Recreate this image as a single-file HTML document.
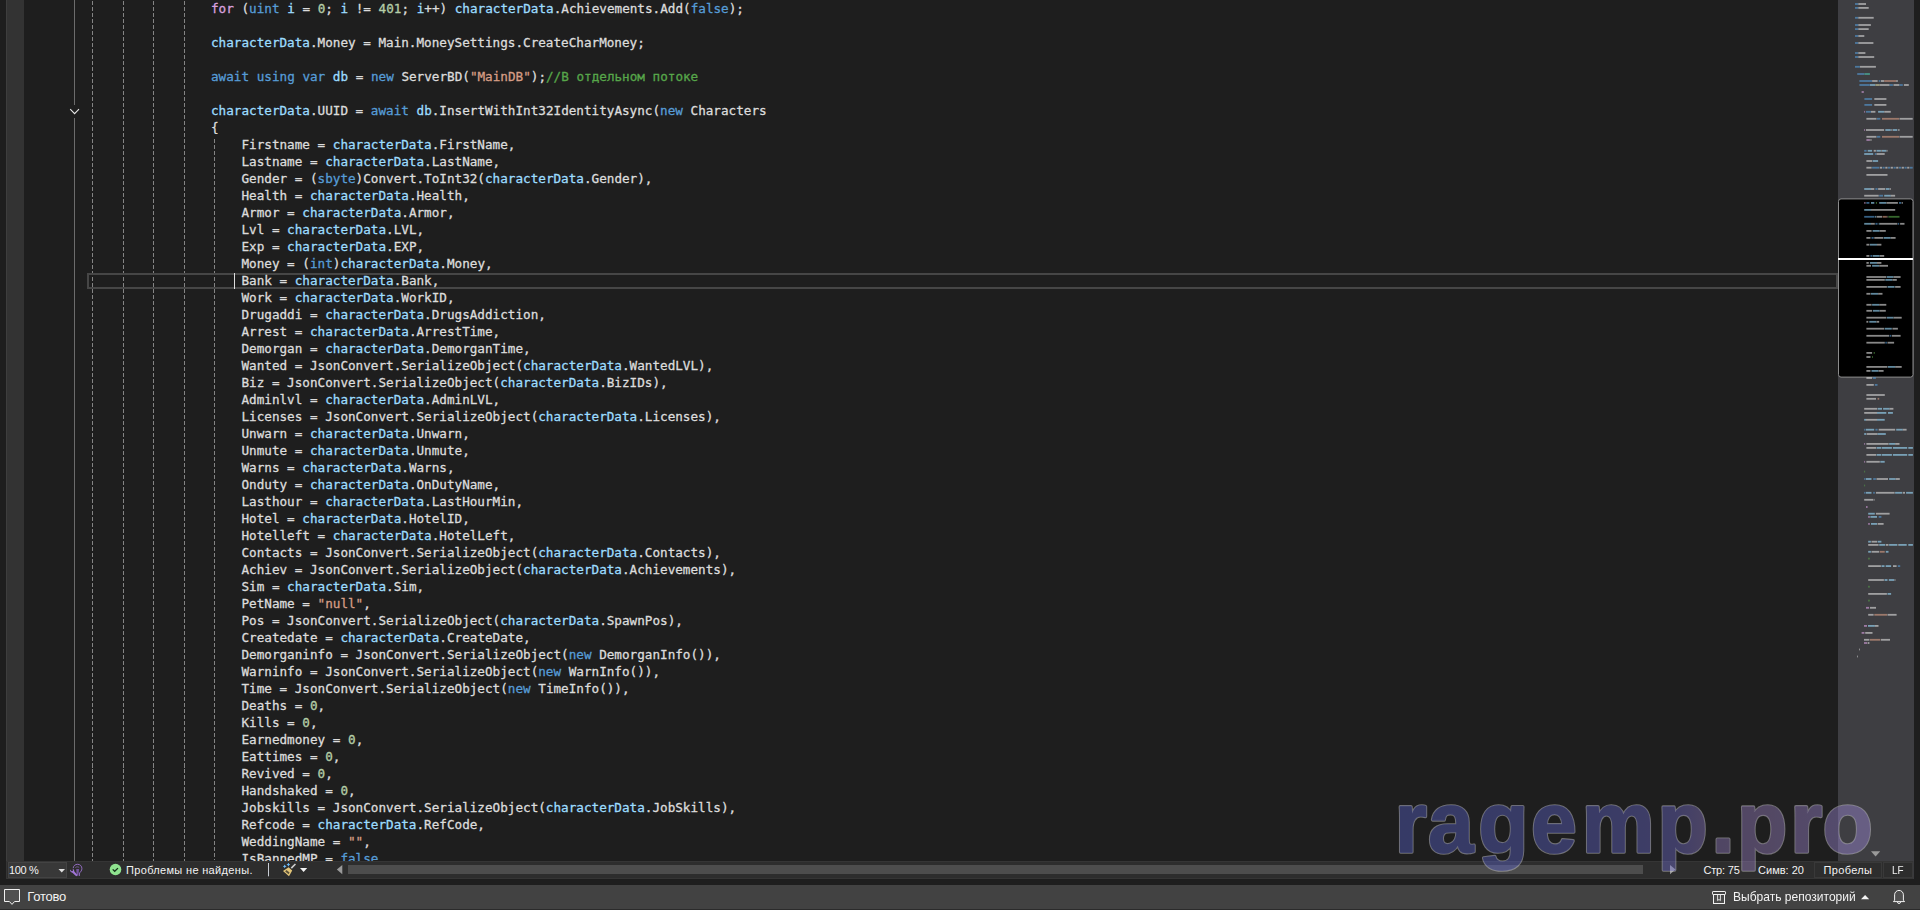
<!DOCTYPE html>
<html lang="ru">
<head>
<meta charset="utf-8">
<title>Visual Studio</title>
<style>
*{box-sizing:border-box;margin:0;padding:0}
html,body{width:1920px;height:910px;overflow:hidden;background:#1e1e1e}
body{position:relative;font-family:"Liberation Sans","DejaVu Sans",sans-serif;color:#dcdcdc}
.abs{position:absolute}
#gutter{left:6px;top:0;width:18px;height:861px;background:#333333;border-left:1px solid #3e3e3e}
#editor{left:0;top:0;width:1838px;height:861px;overflow:hidden}
#code{left:211px;top:0px;-webkit-text-stroke:0.3px;font-family:"DejaVu Sans Mono","Liberation Mono",monospace;font-size:12.65px;line-height:17px;color:#dcdcdc}
#code .l{height:17px;white-space:pre}
.k{color:#569cd6}.f{color:#d8a0df}.v{color:#9cdcfe}.n{color:#b5cea8}.s{color:#d69d85}.c{color:#57a64a}
.guide{width:1px;top:0;height:861px;background:repeating-linear-gradient(to bottom,transparent 0,transparent 1.3px,#848484 1.3px,#848484 5.5px,transparent 5.5px,transparent 6px)}
#curline{left:87px;top:273px;width:1751px;height:16px;border:2px solid #464646}
#caret{left:234px;top:273px;width:1px;height:16px;background:#dcdcdc}
#minimap{left:1838px;top:0;width:76px;height:861px;background:#3e3e42;overflow:hidden}
#bbar{left:6px;top:861px;width:1908px;height:18px;background:#2d2d2d;border:1px solid #353535;font-size:12px}
#status{left:0;top:885px;width:1920px;height:25px;background:#424242;font-size:12px;border-bottom:1px solid #2b2b2b}
.t{position:absolute;white-space:nowrap;line-height:16px;color:#f3f3f3}
.t.m{font-size:11px;top:0px}
.t.s{font-size:13px;top:4px}
</style>
</head>
<body>
<div id="editor" class="abs">
  <div id="gutter" class="abs"></div>
  <div class="abs" style="left:74px;top:0;width:1px;height:105px;background:#6c6c6c"></div>
  <div class="abs" style="left:74px;top:118px;width:1px;height:743px;background:#6c6c6c"></div>
  <svg class="abs" style="left:68px;top:106px" width="14" height="12" viewBox="0 0 14 12"><path d="M2.2 3.2 L6.6 7.6 L11 3.2" fill="none" stroke="#e8e8e8" stroke-width="1.1"/></svg>
  <div class="abs guide" style="left:92px"></div>
  <div class="abs guide" style="left:123px"></div>
  <div class="abs guide" style="left:153px"></div>
  <div class="abs guide" style="left:184px"></div>
  <div class="abs guide" style="left:214px;top:139px;height:722px;background-position:0 -1px"></div>
  <div id="curline" class="abs"></div>
  <div id="caret" class="abs"></div>
  <div id="code" class="abs">
<div class="l"><span class="f">for</span> (<span class="k">uint</span> <span class="v">i</span> = <span class="n">0</span>; <span class="v">i</span> != <span class="n">401</span>; <span class="v">i</span>++) <span class="v">characterData</span>.Achievements.Add(<span class="k">false</span>);</div>
<div class="l"></div>
<div class="l"><span class="v">characterData</span>.Money = Main.MoneySettings.CreateCharMoney;</div>
<div class="l"></div>
<div class="l"><span class="k">await</span> <span class="k">using</span> <span class="k">var</span> <span class="v">db</span> = <span class="k">new</span> ServerBD(<span class="s">&quot;MainDB&quot;</span>);<span class="c">//В отдельном потоке</span></div>
<div class="l"></div>
<div class="l"><span class="v">characterData</span>.UUID = <span class="k">await</span> <span class="v">db</span>.InsertWithInt32IdentityAsync(<span class="k">new</span> Characters</div>
<div class="l">{</div>
<div class="l">    Firstname = <span class="v">characterData</span>.FirstName,</div>
<div class="l">    Lastname = <span class="v">characterData</span>.LastName,</div>
<div class="l">    Gender = (<span class="k">sbyte</span>)Convert.ToInt32(<span class="v">characterData</span>.Gender),</div>
<div class="l">    Health = <span class="v">characterData</span>.Health,</div>
<div class="l">    Armor = <span class="v">characterData</span>.Armor,</div>
<div class="l">    Lvl = <span class="v">characterData</span>.LVL,</div>
<div class="l">    Exp = <span class="v">characterData</span>.EXP,</div>
<div class="l">    Money = (<span class="k">int</span>)<span class="v">characterData</span>.Money,</div>
<div class="l">    Bank = <span class="v">characterData</span>.Bank,</div>
<div class="l">    Work = <span class="v">characterData</span>.WorkID,</div>
<div class="l">    Drugaddi = <span class="v">characterData</span>.DrugsAddiction,</div>
<div class="l">    Arrest = <span class="v">characterData</span>.ArrestTime,</div>
<div class="l">    Demorgan = <span class="v">characterData</span>.DemorganTime,</div>
<div class="l">    Wanted = JsonConvert.SerializeObject(<span class="v">characterData</span>.WantedLVL),</div>
<div class="l">    Biz = JsonConvert.SerializeObject(<span class="v">characterData</span>.BizIDs),</div>
<div class="l">    Adminlvl = <span class="v">characterData</span>.AdminLVL,</div>
<div class="l">    Licenses = JsonConvert.SerializeObject(<span class="v">characterData</span>.Licenses),</div>
<div class="l">    Unwarn = <span class="v">characterData</span>.Unwarn,</div>
<div class="l">    Unmute = <span class="v">characterData</span>.Unmute,</div>
<div class="l">    Warns = <span class="v">characterData</span>.Warns,</div>
<div class="l">    Onduty = <span class="v">characterData</span>.OnDutyName,</div>
<div class="l">    Lasthour = <span class="v">characterData</span>.LastHourMin,</div>
<div class="l">    Hotel = <span class="v">characterData</span>.HotelID,</div>
<div class="l">    Hotelleft = <span class="v">characterData</span>.HotelLeft,</div>
<div class="l">    Contacts = JsonConvert.SerializeObject(<span class="v">characterData</span>.Contacts),</div>
<div class="l">    Achiev = JsonConvert.SerializeObject(<span class="v">characterData</span>.Achievements),</div>
<div class="l">    Sim = <span class="v">characterData</span>.Sim,</div>
<div class="l">    PetName = <span class="s">&quot;null&quot;</span>,</div>
<div class="l">    Pos = JsonConvert.SerializeObject(<span class="v">characterData</span>.SpawnPos),</div>
<div class="l">    Createdate = <span class="v">characterData</span>.CreateDate,</div>
<div class="l">    Demorganinfo = JsonConvert.SerializeObject(<span class="k">new</span> DemorganInfo()),</div>
<div class="l">    Warninfo = JsonConvert.SerializeObject(<span class="k">new</span> WarnInfo()),</div>
<div class="l">    Time = JsonConvert.SerializeObject(<span class="k">new</span> TimeInfo()),</div>
<div class="l">    Deaths = <span class="n">0</span>,</div>
<div class="l">    Kills = <span class="n">0</span>,</div>
<div class="l">    Earnedmoney = <span class="n">0</span>,</div>
<div class="l">    Eattimes = <span class="n">0</span>,</div>
<div class="l">    Revived = <span class="n">0</span>,</div>
<div class="l">    Handshaked = <span class="n">0</span>,</div>
<div class="l">    Jobskills = JsonConvert.SerializeObject(<span class="v">characterData</span>.JobSkills),</div>
<div class="l">    Refcode = <span class="v">characterData</span>.RefCode,</div>
<div class="l">    WeddingName = <span class="s">&quot;&quot;</span>,</div>
<div class="l">    IsBannedMP = <span class="k">false</span>,</div>
  </div>
</div>
<div id="minimap" class="abs">
<svg class="abs" style="left:0;top:0" width="76" height="861" viewBox="0 0 76 861">
<rect x="0.5" y="198.9" width="74.5" height="178.2" rx="2.5" fill="#000" stroke="#8c8c8c" stroke-width="1"/>
<g opacity="0.62">
<rect x="17.0" y="3.1" width="3.3" height="1.8" fill="#569cd6"/>
<rect x="20.3" y="3.1" width="7.7" height="1.8" fill="#dcdcdc"/>
<rect x="17.0" y="7.0" width="3.3" height="1.8" fill="#569cd6"/>
<rect x="20.3" y="7.0" width="10.4" height="1.8" fill="#dcdcdc"/>
<rect x="17.0" y="16.9" width="3.3" height="1.8" fill="#569cd6"/>
<rect x="20.3" y="16.9" width="15.4" height="1.8" fill="#dcdcdc"/>
<rect x="17.0" y="24.1" width="3.3" height="1.8" fill="#569cd6"/>
<rect x="20.3" y="24.1" width="12.6" height="1.8" fill="#dcdcdc"/>
<rect x="17.0" y="28.2" width="3.3" height="1.8" fill="#569cd6"/>
<rect x="20.3" y="28.2" width="10.4" height="1.8" fill="#dcdcdc"/>
<rect x="17.0" y="35.1" width="3.3" height="1.8" fill="#569cd6"/>
<rect x="20.3" y="35.1" width="6.0" height="1.8" fill="#dcdcdc"/>
<rect x="17.0" y="42.1" width="3.3" height="1.8" fill="#569cd6"/>
<rect x="20.3" y="42.1" width="15.1" height="1.8" fill="#dcdcdc"/>
<rect x="17.0" y="52.1" width="3.3" height="1.8" fill="#569cd6"/>
<rect x="20.3" y="52.1" width="7.1" height="1.8" fill="#dcdcdc"/>
<rect x="17.0" y="56.1" width="3.3" height="1.8" fill="#569cd6"/>
<rect x="20.3" y="56.1" width="15.9" height="1.8" fill="#dcdcdc"/>
<rect x="17.0" y="65.9" width="4.9" height="1.8" fill="#569cd6"/>
<rect x="22.0" y="65.9" width="15.9" height="1.8" fill="#dcdcdc"/>
<rect x="19.2" y="73.1" width="7.1" height="1.8" fill="#569cd6"/>
<rect x="26.4" y="73.1" width="5.5" height="1.8" fill="#4ec9b0"/>
<rect x="21.4" y="80.1" width="12.6" height="1.8" fill="#569cd6"/>
<rect x="34.1" y="80.1" width="5.5" height="1.8" fill="#dcdcdc"/>
<rect x="40.7" y="80.1" width="1.6" height="1.8" fill="#569cd6"/>
<rect x="42.9" y="80.1" width="3.3" height="1.8" fill="#dcdcdc"/>
<rect x="46.2" y="80.1" width="12.1" height="1.8" fill="#d69d85"/>
<rect x="58.2" y="80.1" width="1.6" height="1.8" fill="#dcdcdc"/>
<rect x="21.4" y="84.1" width="10.4" height="1.8" fill="#569cd6"/>
<rect x="31.9" y="84.1" width="5.5" height="1.8" fill="#9cdcfe"/>
<rect x="37.4" y="84.1" width="4.4" height="1.8" fill="#dcdcaa"/>
<rect x="41.8" y="84.1" width="9.9" height="1.8" fill="#dcdcdc"/>
<rect x="51.6" y="84.1" width="3.3" height="1.8" fill="#569cd6"/>
<rect x="55.5" y="84.1" width="6.0" height="1.8" fill="#dcdcdc"/>
<rect x="61.5" y="84.1" width="3.3" height="1.8" fill="#569cd6"/>
<rect x="65.9" y="84.1" width="4.9" height="1.8" fill="#dcdcdc"/>
<rect x="23.6" y="91.1" width="2.2" height="1.8" fill="#d8a0df"/>
<rect x="26.4" y="98.1" width="7.7" height="1.8" fill="#569cd6"/>
<rect x="36.3" y="98.1" width="12.1" height="1.8" fill="#dcdcdc"/>
<rect x="26.4" y="104.0" width="7.7" height="1.8" fill="#569cd6"/>
<rect x="36.3" y="104.0" width="12.1" height="1.8" fill="#dcdcdc"/>
<rect x="26.2" y="110.9" width="0.9" height="1.8" fill="#d8a0df"/>
<rect x="28.0" y="110.9" width="4.9" height="1.8" fill="#569cd6"/>
<rect x="33.0" y="110.9" width="4.4" height="1.8" fill="#dcdcdc"/>
<rect x="40.1" y="110.9" width="6.0" height="1.8" fill="#9cdcfe"/>
<rect x="46.2" y="110.9" width="6.6" height="1.8" fill="#dcdcdc"/>
<rect x="28.4" y="117.9" width="10.1" height="1.8" fill="#dcdcdc"/>
<rect x="39.0" y="117.9" width="3.3" height="1.8" fill="#569cd6"/>
<rect x="44.0" y="117.9" width="17.0" height="1.8" fill="#d69d85"/>
<rect x="61.5" y="117.9" width="13.2" height="1.8" fill="#dcdcdc"/>
<rect x="26.2" y="129.1" width="0.9" height="1.8" fill="#d8a0df"/>
<rect x="28.0" y="129.1" width="18.1" height="1.8" fill="#dcdcdc"/>
<rect x="47.3" y="129.1" width="5.5" height="1.8" fill="#9cdcfe"/>
<rect x="53.3" y="129.1" width="1.1" height="1.8" fill="#dcdcdc"/>
<rect x="54.9" y="129.1" width="4.4" height="1.8" fill="#9cdcfe"/>
<rect x="60.2" y="129.1" width="1.3" height="1.8" fill="#dcdcdc"/>
<rect x="28.4" y="135.9" width="10.1" height="1.8" fill="#dcdcdc"/>
<rect x="39.0" y="135.9" width="3.3" height="1.8" fill="#569cd6"/>
<rect x="44.0" y="135.9" width="17.0" height="1.8" fill="#d69d85"/>
<rect x="61.5" y="135.9" width="13.2" height="1.8" fill="#dcdcdc"/>
<rect x="28.4" y="139.1" width="3.5" height="1.8" fill="#d8a0df"/>
<rect x="32.4" y="139.1" width="1.1" height="1.8" fill="#dcdcdc"/>
<rect x="26.2" y="149.9" width="2.4" height="1.8" fill="#569cd6"/>
<rect x="29.7" y="149.9" width="4.4" height="1.8" fill="#9cdcfe"/>
<rect x="35.7" y="149.9" width="2.2" height="1.8" fill="#dcdcdc"/>
<rect x="38.5" y="149.9" width="4.4" height="1.8" fill="#9cdcfe"/>
<rect x="43.1" y="149.9" width="0.7" height="1.8" fill="#dcdcdc"/>
<rect x="44.0" y="149.9" width="4.4" height="1.8" fill="#9cdcfe"/>
<rect x="48.6" y="149.9" width="0.9" height="1.8" fill="#dcdcdc"/>
<rect x="26.2" y="153.1" width="9.0" height="1.8" fill="#9cdcfe"/>
<rect x="36.8" y="153.1" width="1.6" height="1.8" fill="#569cd6"/>
<rect x="38.5" y="153.1" width="8.2" height="1.8" fill="#dcdcdc"/>
<rect x="28.4" y="160.1" width="5.7" height="1.8" fill="#dcdcdc"/>
<rect x="34.6" y="160.1" width="5.5" height="1.8" fill="#9cdcfe"/>
<rect x="28.4" y="166.8" width="5.2" height="1.8" fill="#dcdcdc"/>
<rect x="34.1" y="166.8" width="7.1" height="1.8" fill="#569cd6"/>
<rect x="41.8" y="166.8" width="2.2" height="1.8" fill="#dcdcdc"/>
<rect x="44.5" y="166.8" width="2.2" height="1.8" fill="#569cd6"/>
<rect x="47.3" y="166.8" width="2.2" height="1.8" fill="#dcdcdc"/>
<rect x="50.0" y="166.8" width="2.2" height="1.8" fill="#569cd6"/>
<rect x="52.7" y="166.8" width="2.2" height="1.8" fill="#dcdcdc"/>
<rect x="55.5" y="166.8" width="2.2" height="1.8" fill="#569cd6"/>
<rect x="58.2" y="166.8" width="2.2" height="1.8" fill="#dcdcdc"/>
<rect x="61.0" y="166.8" width="2.2" height="1.8" fill="#569cd6"/>
<rect x="63.7" y="166.8" width="2.2" height="1.8" fill="#dcdcdc"/>
<rect x="66.5" y="166.8" width="2.2" height="1.8" fill="#569cd6"/>
<rect x="69.2" y="166.8" width="2.2" height="1.8" fill="#dcdcdc"/>
<rect x="72.0" y="166.8" width="2.7" height="1.8" fill="#569cd6"/>
<rect x="28.4" y="174.0" width="21.1" height="1.8" fill="#dcdcdc"/>
<rect x="26.2" y="188.1" width="6.8" height="1.8" fill="#9cdcfe"/>
<rect x="33.0" y="188.1" width="3.3" height="1.8" fill="#dcdcdc"/>
<rect x="37.4" y="188.1" width="2.2" height="1.8" fill="#569cd6"/>
<rect x="40.1" y="188.1" width="7.1" height="1.8" fill="#dcdcdc"/>
<rect x="47.8" y="188.1" width="3.8" height="1.8" fill="#9cdcfe"/>
<rect x="51.9" y="188.1" width="0.9" height="1.8" fill="#dcdcdc"/>
<rect x="26.2" y="194.8" width="14.5" height="1.8" fill="#dcdcdc"/>
<rect x="41.2" y="194.8" width="3.8" height="1.8" fill="#569cd6"/>
<rect x="46.2" y="194.8" width="6.6" height="1.8" fill="#9cdcfe"/>
<rect x="52.7" y="194.8" width="4.4" height="1.8" fill="#dcdcdc"/>
<rect x="26.2" y="202.0" width="1.1" height="1.8" fill="#d8a0df"/>
<rect x="27.7" y="202.0" width="0.4" height="1.8" fill="#dcdcdc"/>
<rect x="28.4" y="202.0" width="3.0" height="1.8" fill="#569cd6"/>
<rect x="33.0" y="202.0" width="3.3" height="1.8" fill="#9cdcfe"/>
<rect x="37.9" y="202.0" width="1.1" height="1.8" fill="#57a64a"/>
<rect x="41.2" y="202.0" width="7.1" height="1.8" fill="#9cdcfe"/>
<rect x="48.4" y="202.0" width="11.5" height="1.8" fill="#dcdcdc"/>
<rect x="61.0" y="202.0" width="2.2" height="1.8" fill="#569cd6"/>
<rect x="63.7" y="202.0" width="1.1" height="1.8" fill="#dcdcdc"/>
<rect x="26.2" y="209.0" width="6.8" height="1.8" fill="#9cdcfe"/>
<rect x="33.0" y="209.0" width="24.2" height="1.8" fill="#dcdcdc"/>
<rect x="26.2" y="215.9" width="10.1" height="1.8" fill="#569cd6"/>
<rect x="36.8" y="215.9" width="1.1" height="1.8" fill="#9cdcfe"/>
<rect x="38.5" y="215.9" width="5.5" height="1.8" fill="#dcdcdc"/>
<rect x="44.5" y="215.9" width="4.4" height="1.8" fill="#d69d85"/>
<rect x="49.5" y="215.9" width="0.7" height="1.8" fill="#dcdcdc"/>
<rect x="50.5" y="215.9" width="11.0" height="1.8" fill="#57a64a"/>
<rect x="26.2" y="222.9" width="6.8" height="1.8" fill="#9cdcfe"/>
<rect x="33.0" y="222.9" width="3.8" height="1.8" fill="#dcdcdc"/>
<rect x="37.4" y="222.9" width="2.2" height="1.8" fill="#569cd6"/>
<rect x="40.7" y="222.9" width="1.1" height="1.8" fill="#9cdcfe"/>
<rect x="41.8" y="222.9" width="17.6" height="1.8" fill="#dcdcdc"/>
<rect x="59.9" y="222.9" width="1.3" height="1.8" fill="#569cd6"/>
<rect x="62.1" y="222.9" width="4.4" height="1.8" fill="#dcdcdc"/>
<rect x="28.4" y="230.0" width="5.2" height="1.8" fill="#dcdcdc"/>
<rect x="34.6" y="230.0" width="7.1" height="1.8" fill="#9cdcfe"/>
<rect x="41.8" y="230.0" width="6.0" height="1.8" fill="#dcdcdc"/>
<rect x="28.4" y="237.0" width="4.1" height="1.8" fill="#dcdcdc"/>
<rect x="33.5" y="237.0" width="2.2" height="1.8" fill="#569cd6"/>
<rect x="36.3" y="237.0" width="8.8" height="1.8" fill="#dcdcdc"/>
<rect x="45.6" y="237.0" width="7.1" height="1.8" fill="#9cdcfe"/>
<rect x="52.7" y="237.0" width="4.9" height="1.8" fill="#dcdcdc"/>
<rect x="28.4" y="243.8" width="3.0" height="1.8" fill="#dcdcdc"/>
<rect x="31.9" y="243.8" width="7.1" height="1.8" fill="#9cdcfe"/>
<rect x="39.0" y="243.8" width="4.4" height="1.8" fill="#dcdcdc"/>
<rect x="28.4" y="255.0" width="3.0" height="1.8" fill="#dcdcdc"/>
<rect x="32.4" y="255.0" width="1.6" height="1.8" fill="#569cd6"/>
<rect x="34.6" y="255.0" width="7.1" height="1.8" fill="#9cdcfe"/>
<rect x="41.8" y="255.0" width="4.4" height="1.8" fill="#dcdcdc"/>
<rect x="28.4" y="262.0" width="2.4" height="1.8" fill="#dcdcdc"/>
<rect x="31.9" y="262.0" width="7.1" height="1.8" fill="#9cdcfe"/>
<rect x="39.0" y="262.0" width="4.4" height="1.8" fill="#dcdcdc"/>
<rect x="28.4" y="264.9" width="4.6" height="1.8" fill="#dcdcdc"/>
<rect x="34.1" y="264.9" width="7.1" height="1.8" fill="#9cdcfe"/>
<rect x="41.2" y="264.9" width="8.8" height="1.8" fill="#dcdcdc"/>
<rect x="28.4" y="276.1" width="20.0" height="1.8" fill="#dcdcdc"/>
<rect x="48.9" y="276.1" width="6.6" height="1.8" fill="#9cdcfe"/>
<rect x="55.5" y="276.1" width="7.1" height="1.8" fill="#dcdcdc"/>
<rect x="28.4" y="279.0" width="18.4" height="1.8" fill="#dcdcdc"/>
<rect x="47.3" y="279.0" width="7.1" height="1.8" fill="#9cdcfe"/>
<rect x="54.4" y="279.0" width="4.4" height="1.8" fill="#dcdcdc"/>
<rect x="28.4" y="286.0" width="20.5" height="1.8" fill="#dcdcdc"/>
<rect x="49.5" y="286.0" width="7.1" height="1.8" fill="#9cdcfe"/>
<rect x="57.1" y="286.0" width="5.5" height="1.8" fill="#dcdcdc"/>
<rect x="28.4" y="292.9" width="4.1" height="1.8" fill="#dcdcdc"/>
<rect x="33.0" y="292.9" width="7.1" height="1.8" fill="#9cdcfe"/>
<rect x="40.1" y="292.9" width="4.4" height="1.8" fill="#dcdcdc"/>
<rect x="28.4" y="303.9" width="5.2" height="1.8" fill="#dcdcdc"/>
<rect x="34.1" y="303.9" width="7.1" height="1.8" fill="#9cdcfe"/>
<rect x="41.2" y="303.9" width="7.1" height="1.8" fill="#dcdcdc"/>
<rect x="28.4" y="309.9" width="5.7" height="1.8" fill="#dcdcdc"/>
<rect x="34.9" y="309.9" width="6.8" height="1.8" fill="#9cdcfe"/>
<rect x="41.8" y="309.9" width="6.0" height="1.8" fill="#dcdcdc"/>
<rect x="28.4" y="316.8" width="20.0" height="1.8" fill="#dcdcdc"/>
<rect x="48.9" y="316.8" width="6.6" height="1.8" fill="#9cdcfe"/>
<rect x="55.5" y="316.8" width="8.2" height="1.8" fill="#dcdcdc"/>
<rect x="28.4" y="320.9" width="1.9" height="1.8" fill="#dcdcdc"/>
<rect x="31.3" y="320.9" width="7.1" height="1.8" fill="#9cdcfe"/>
<rect x="38.5" y="320.9" width="2.7" height="1.8" fill="#dcdcdc"/>
<rect x="28.4" y="327.8" width="17.8" height="1.8" fill="#dcdcdc"/>
<rect x="46.7" y="327.8" width="7.1" height="1.8" fill="#9cdcfe"/>
<rect x="54.4" y="327.8" width="5.5" height="1.8" fill="#dcdcdc"/>
<rect x="28.4" y="334.9" width="22.7" height="1.8" fill="#dcdcdc"/>
<rect x="51.6" y="334.9" width="1.6" height="1.8" fill="#569cd6"/>
<rect x="53.8" y="334.9" width="8.8" height="1.8" fill="#dcdcdc"/>
<rect x="28.4" y="341.8" width="18.4" height="1.8" fill="#dcdcdc"/>
<rect x="47.3" y="341.8" width="1.6" height="1.8" fill="#569cd6"/>
<rect x="49.5" y="341.8" width="6.6" height="1.8" fill="#dcdcdc"/>
<rect x="28.4" y="352.0" width="5.7" height="1.8" fill="#dcdcdc"/>
<rect x="35.7" y="352.0" width="1.1" height="1.8" fill="#57a64a"/>
<rect x="28.4" y="356.1" width="4.1" height="1.8" fill="#dcdcdc"/>
<rect x="34.1" y="356.1" width="0.9" height="1.8" fill="#57a64a"/>
<rect x="28.4" y="366.0" width="21.1" height="1.8" fill="#dcdcdc"/>
<rect x="50.0" y="366.0" width="7.1" height="1.8" fill="#9cdcfe"/>
<rect x="57.1" y="366.0" width="6.6" height="1.8" fill="#dcdcdc"/>
<rect x="28.4" y="370.0" width="4.1" height="1.8" fill="#dcdcdc"/>
<rect x="33.5" y="370.0" width="7.1" height="1.8" fill="#9cdcfe"/>
<rect x="40.7" y="370.0" width="4.9" height="1.8" fill="#dcdcdc"/>
<rect x="28.4" y="377.1" width="5.7" height="1.8" fill="#dcdcdc"/>
<rect x="34.9" y="377.1" width="3.0" height="1.8" fill="#569cd6"/>
<rect x="28.4" y="384.0" width="7.4" height="1.8" fill="#dcdcdc"/>
<rect x="36.8" y="384.0" width="2.7" height="1.8" fill="#569cd6"/>
<rect x="28.4" y="394.1" width="18.4" height="1.8" fill="#dcdcdc"/>
<rect x="28.4" y="397.9" width="9.6" height="1.8" fill="#dcdcdc"/>
<rect x="39.6" y="397.9" width="1.6" height="1.8" fill="#d69d85"/>
<rect x="26.2" y="407.9" width="12.9" height="1.8" fill="#dcdcdc"/>
<rect x="39.6" y="407.9" width="4.4" height="1.8" fill="#9cdcfe"/>
<rect x="45.1" y="407.9" width="6.6" height="1.8" fill="#9cdcfe"/>
<rect x="51.6" y="407.9" width="3.8" height="1.8" fill="#dcdcdc"/>
<rect x="26.2" y="412.0" width="12.9" height="1.8" fill="#dcdcdc"/>
<rect x="39.0" y="412.0" width="9.3" height="1.8" fill="#9cdcfe"/>
<rect x="50.0" y="412.0" width="4.9" height="1.8" fill="#9cdcfe"/>
<rect x="26.2" y="418.9" width="1.9" height="1.8" fill="#9cdcfe"/>
<rect x="28.0" y="418.9" width="11.0" height="1.8" fill="#dcdcdc"/>
<rect x="39.0" y="418.9" width="7.7" height="1.8" fill="#9cdcfe"/>
<rect x="26.2" y="428.8" width="1.3" height="1.8" fill="#569cd6"/>
<rect x="28.0" y="428.8" width="8.2" height="1.8" fill="#9cdcfe"/>
<rect x="37.4" y="428.8" width="2.2" height="1.8" fill="#569cd6"/>
<rect x="40.7" y="428.8" width="16.5" height="1.8" fill="#dcdcdc"/>
<rect x="58.2" y="428.8" width="6.6" height="1.8" fill="#9cdcfe"/>
<rect x="64.8" y="428.8" width="3.8" height="1.8" fill="#dcdcdc"/>
<rect x="26.2" y="433.1" width="1.9" height="1.8" fill="#9cdcfe"/>
<rect x="28.6" y="433.1" width="11.0" height="1.8" fill="#dcdcdc"/>
<rect x="39.6" y="433.1" width="8.2" height="1.8" fill="#9cdcfe"/>
<rect x="26.2" y="443.0" width="0.9" height="1.8" fill="#d8a0df"/>
<rect x="28.4" y="443.0" width="22.2" height="1.8" fill="#dcdcdc"/>
<rect x="51.1" y="443.0" width="6.0" height="1.8" fill="#9cdcfe"/>
<rect x="57.1" y="443.0" width="4.4" height="1.8" fill="#dcdcdc"/>
<rect x="28.4" y="447.0" width="9.6" height="1.8" fill="#dcdcdc"/>
<rect x="38.5" y="447.0" width="4.9" height="1.8" fill="#9cdcfe"/>
<rect x="44.0" y="447.0" width="9.9" height="1.8" fill="#9cdcfe"/>
<rect x="54.9" y="447.0" width="14.3" height="1.8" fill="#9cdcfe"/>
<rect x="70.3" y="447.0" width="4.6" height="1.8" fill="#9cdcfe"/>
<rect x="28.4" y="454.0" width="9.6" height="1.8" fill="#dcdcdc"/>
<rect x="38.5" y="454.0" width="4.9" height="1.8" fill="#9cdcfe"/>
<rect x="44.0" y="454.0" width="9.9" height="1.8" fill="#9cdcfe"/>
<rect x="54.9" y="454.0" width="14.3" height="1.8" fill="#9cdcfe"/>
<rect x="70.3" y="454.0" width="4.6" height="1.8" fill="#9cdcfe"/>
<rect x="26.2" y="460.9" width="0.9" height="1.8" fill="#d8a0df"/>
<rect x="28.4" y="460.9" width="13.4" height="1.8" fill="#dcdcdc"/>
<rect x="42.3" y="460.9" width="4.4" height="1.8" fill="#9cdcfe"/>
<rect x="26.2" y="470.7" width="0.9" height="1.8" fill="#57a64a"/>
<rect x="26.2" y="478.1" width="1.3" height="1.8" fill="#569cd6"/>
<rect x="28.0" y="478.1" width="5.5" height="1.8" fill="#9cdcfe"/>
<rect x="35.2" y="478.1" width="2.7" height="1.8" fill="#569cd6"/>
<rect x="38.5" y="478.1" width="11.5" height="1.8" fill="#dcdcdc"/>
<rect x="51.1" y="478.1" width="6.6" height="1.8" fill="#9cdcfe"/>
<rect x="57.7" y="478.1" width="4.1" height="1.8" fill="#dcdcdc"/>
<rect x="26.2" y="484.6" width="0.9" height="1.8" fill="#57a64a"/>
<rect x="26.2" y="491.9" width="1.3" height="1.8" fill="#569cd6"/>
<rect x="28.0" y="491.9" width="5.5" height="1.8" fill="#9cdcfe"/>
<rect x="35.2" y="491.9" width="1.6" height="1.8" fill="#569cd6"/>
<rect x="37.9" y="491.9" width="18.7" height="1.8" fill="#dcdcdc"/>
<rect x="57.1" y="491.9" width="7.1" height="1.8" fill="#9cdcfe"/>
<rect x="64.8" y="491.9" width="2.2" height="1.8" fill="#dcdcdc"/>
<rect x="68.1" y="491.9" width="6.8" height="1.8" fill="#9cdcfe"/>
<rect x="26.2" y="498.9" width="9.0" height="1.8" fill="#dcdcdc"/>
<rect x="35.7" y="498.9" width="0.8" height="1.8" fill="#dcdcdc"/>
<rect x="28.0" y="506.1" width="1.6" height="1.8" fill="#d8a0df"/>
<rect x="30.2" y="512.8" width="6.6" height="1.8" fill="#9cdcfe"/>
<rect x="37.9" y="512.8" width="13.7" height="1.8" fill="#dcdcdc"/>
<rect x="30.2" y="516.0" width="1.6" height="1.8" fill="#d8a0df"/>
<rect x="32.4" y="516.0" width="6.6" height="1.8" fill="#9cdcfe"/>
<rect x="40.7" y="516.0" width="2.7" height="1.8" fill="#569cd6"/>
<rect x="30.2" y="523.0" width="1.6" height="1.8" fill="#d8a0df"/>
<rect x="33.0" y="523.0" width="6.0" height="1.8" fill="#9cdcfe"/>
<rect x="39.6" y="523.0" width="6.0" height="1.8" fill="#dcdcdc"/>
<rect x="30.2" y="540.8" width="2.7" height="1.8" fill="#9cdcfe"/>
<rect x="33.5" y="540.8" width="5.5" height="1.8" fill="#dcdcdc"/>
<rect x="39.6" y="540.8" width="3.8" height="1.8" fill="#9cdcfe"/>
<rect x="30.2" y="544.0" width="10.4" height="1.8" fill="#dcdcdc"/>
<rect x="41.2" y="544.0" width="6.0" height="1.8" fill="#9cdcfe"/>
<rect x="47.8" y="544.0" width="2.7" height="1.8" fill="#dcdcdc"/>
<rect x="51.1" y="544.0" width="8.2" height="1.8" fill="#9cdcfe"/>
<rect x="59.9" y="544.0" width="0.8" height="1.8" fill="#dcdcdc"/>
<rect x="61.0" y="544.0" width="7.7" height="1.8" fill="#9cdcfe"/>
<rect x="70.3" y="544.0" width="4.6" height="1.8" fill="#9cdcfe"/>
<rect x="30.2" y="550.9" width="2.7" height="1.8" fill="#9cdcfe"/>
<rect x="33.5" y="550.9" width="7.7" height="1.8" fill="#dcdcdc"/>
<rect x="41.8" y="550.9" width="4.9" height="1.8" fill="#d69d85"/>
<rect x="47.8" y="550.9" width="2.7" height="1.8" fill="#9cdcfe"/>
<rect x="30.2" y="557.7" width="1.5" height="1.8" fill="#57a64a"/>
<rect x="30.2" y="565.2" width="12.7" height="1.8" fill="#dcdcdc"/>
<rect x="43.5" y="565.2" width="3.0" height="1.8" fill="#9cdcfe"/>
<rect x="47.7" y="565.2" width="5.4" height="1.8" fill="#9cdcfe"/>
<rect x="55.0" y="565.2" width="3.6" height="1.8" fill="#dcdcdc"/>
<rect x="59.8" y="565.2" width="2.4" height="1.8" fill="#569cd6"/>
<rect x="30.2" y="579.1" width="15.7" height="1.8" fill="#dcdcdc"/>
<rect x="46.5" y="579.1" width="3.0" height="1.8" fill="#9cdcfe"/>
<rect x="50.8" y="579.1" width="5.4" height="1.8" fill="#9cdcfe"/>
<rect x="56.6" y="579.1" width="0.8" height="1.8" fill="#dcdcdc"/>
<rect x="30.2" y="585.8" width="1.5" height="1.8" fill="#57a64a"/>
<rect x="30.2" y="593.0" width="18.7" height="1.8" fill="#dcdcdc"/>
<rect x="49.5" y="593.0" width="3.6" height="1.8" fill="#9cdcfe"/>
<rect x="30.2" y="599.7" width="1.5" height="1.8" fill="#57a64a"/>
<rect x="28.0" y="606.9" width="3.1" height="1.8" fill="#d8a0df"/>
<rect x="32.0" y="606.9" width="6.0" height="1.8" fill="#dcdcdc"/>
<rect x="30.2" y="613.9" width="5.4" height="1.8" fill="#dcdcdc"/>
<rect x="36.3" y="613.9" width="12.7" height="1.8" fill="#d69d85"/>
<rect x="49.5" y="613.9" width="9.1" height="1.8" fill="#dcdcdc"/>
<rect x="26.0" y="625.0" width="3.0" height="1.8" fill="#d8a0df"/>
<rect x="30.0" y="625.0" width="6.9" height="1.8" fill="#9cdcfe"/>
<rect x="36.9" y="625.0" width="3.6" height="1.8" fill="#dcdcdc"/>
<rect x="23.6" y="632.0" width="2.8" height="1.8" fill="#d8a0df"/>
<rect x="27.2" y="632.0" width="7.3" height="1.8" fill="#dcdcdc"/>
<rect x="26.0" y="638.9" width="5.4" height="1.8" fill="#dcdcdc"/>
<rect x="32.0" y="638.9" width="10.3" height="1.8" fill="#d69d85"/>
<rect x="42.9" y="638.9" width="9.1" height="1.8" fill="#dcdcdc"/>
<rect x="26.0" y="642.1" width="3.0" height="1.8" fill="#d8a0df"/>
<rect x="29.6" y="642.1" width="1.8" height="1.8" fill="#dcdcdc"/>
<rect x="21.1" y="648.6" width="0.8" height="1.8" fill="#dcdcdc"/>
<rect x="19.1" y="655.6" width="0.8" height="1.8" fill="#dcdcdc"/>
</g>
<rect x="0" y="258" width="75" height="2" fill="#fff"/>
</svg>
</div>
<div id="bbar" class="abs">
  <div class="abs" style="left:1px;top:0px;width:59px;height:16px;background:#383838;border:1px solid #434343"></div>
  <div class="t m" id="t1" style="left:2.1px;letter-spacing:-0.4px">100 %</div>
  <svg class="abs" style="left:51px;top:7px" width="8" height="4" viewBox="0 0 8 4"><path d="M0.5 0 L7 0 L3.75 3.6 Z" fill="#e0e0e0"/></svg>
  <div class="t m" id="t2" style="left:119px;letter-spacing:0.33px">Проблемы не найдены.</div>
  <div class="t m" id="t3" style="left:1696.4px;letter-spacing:-0.18px">Стр: 75</div>
  <div class="t m" id="t4" style="left:1751.1px;letter-spacing:0px">Симв: 20</div>
  <div class="abs" style="left:1807px;top:0px;width:68px;height:16px;background:#2d2d2d;border:1px solid #393939"></div>
  <div class="abs" style="left:1876px;top:0px;width:30px;height:16px;background:#2d2d2d;border:1px solid #393939"></div>
  <div class="abs" style="left:1906px;top:-1px;width:1px;height:18px;background:#3a3a3d"></div>
  <div class="t m" id="t5" style="left:1816.6px;letter-spacing:0.33px">Пробелы</div>
  <div class="t m" id="t6" style="left:1885.2px;transform:scaleX(0.9);transform-origin:0 0">LF</div>
</div>
<div id="status" class="abs">
  <div class="t s" id="t7" style="left:27.3px;letter-spacing:-0.25px">Готово</div>
  <div class="t s" id="t8" style="left:1732.6px;transform:scaleX(0.926);transform-origin:0 0">Выбрать репозиторий</div>
</div>

<svg class="abs" style="left:0;top:845px" width="1920" height="65" viewBox="0 845 1920 65">
  <!-- purple head + wrench -->
  <g fill="none" stroke="#a176d6" stroke-width="1">
    <path d="M73.2 868.2 C73.4 865.6 75.4 864.3 77.6 864.3 C80.2 864.3 81.9 866.2 81.9 868.6 C81.9 870.6 80.6 871.8 79.6 872.9 L79.3 876" stroke-opacity="0.85"/>
    <path d="M75.4 867.6 C76.2 866.6 78.4 866.6 79.2 867.6" stroke-opacity="0.6"/>
  </g>
  <path d="M76.3 869 L79 869 L78.4 875.6 L76.6 875.6 Z" fill="#7d58ad" fill-opacity="0.9"/>
  <path d="M70.2 869.6 C69.7 871.2 70.6 872.6 72.4 872.7 L76.2 876.3 L77.6 875.2 L74.2 871.3 C74.4 870.2 73.8 869.3 72.8 869 L72.9 870.9 L71.6 871.2 Z" fill="#a176d6"/>
  <!-- green check -->
  <circle cx="115.5" cy="869.5" r="5.8" fill="#8fe38f"/>
  <path d="M112.7 869.4 L114.7 871.3 L118 868.1" fill="none" stroke="#16301a" stroke-width="1.3"/>
  <!-- separator -->
  <rect x="268" y="863" width="1" height="13.3" fill="#c9ced6"/>
  <!-- broom -->
  <path d="M284.7 864.6 L285.4 865.8 L286.6 866.4 L285.4 867 L284.7 868.2 L284 867 L282.8 866.4 L284 865.8 Z" fill="#6fbcf7"/>
  <path d="M288.4 862.8 L289.1 864 L290.3 864.6 L289.1 865.2 L288.4 866.4 L287.7 865.2 L286.5 864.6 L287.7 864 Z" fill="#6fbcf7"/>
  <path d="M290.7 867.6 L294.9 863.4 L296 864.5 L291.9 868.8 Z" fill="#cfcfcf"/>
  <path d="M288.6 867.2 L292.2 870.6 L289 876.2 L283 871 Z" fill="#e3c578"/>
  <path d="M286.4 870 L289.6 872.6 L288.6 874.2 L285.2 871.4 Z" fill="#5b5137"/>
  <path d="M300 868 L307.2 868 L303.6 872 Z" fill="#f2f2f2"/>
  <!-- h scrollbar -->
  <path d="M342.3 865 L342.3 874.2 L336.8 869.6 Z" fill="#9a9a9a"/>
  <rect x="348" y="865" width="1295" height="9" fill="#4d4d4d"/>
  <path d="M1670 865 L1670 874.2 L1675.5 869.6 Z" fill="#9a9a9a"/>
  <path d="M1871 851.2 L1880.2 851.2 L1875.6 856.4 Z" fill="#9a9a9a"/>
  <!-- status: feedback icon -->
  <path d="M4.5 889.5 H19.5 V901.5 H14.6 L12 904.4 L9.4 901.5 H4.5 Z" fill="#505050" stroke="#f1f1f1" stroke-width="1"/>
  <!-- repo icon -->
  <rect x="1713.5" y="894.5" width="11" height="9" fill="#4a4a4a" stroke="#f1f1f1" stroke-width="1"/>
  <rect x="1712.5" y="891.5" width="13" height="3" rx="0.6" fill="#424242" stroke="#f1f1f1" stroke-width="1"/>
  <path d="M1717.6 895 V900.6 L1719 899.4 L1720.4 900.6 V895" fill="none" stroke="#f1f1f1" stroke-width="0.9"/>
  <!-- up arrow -->
  <path d="M1861 899.2 L1869.2 899.2 L1865.1 894.9 Z" fill="#f5f5f5"/>
  <!-- bell -->
  <path d="M1894.6 900.2 V894.8 A4.4 4.4 0 0 1 1903.4 894.8 V900.2 L1904.6 901.6 H1893.4 Z" fill="#505050" stroke="#f1f1f1" stroke-width="1"/>
  <path d="M1897.5 902 A1.5 1.5 0 0 0 1900.5 902" fill="none" stroke="#f1f1f1" stroke-width="1"/>
</svg>
<svg class="abs" style="left:1380px;top:770px" width="540" height="120" viewBox="0 0 540 120">
  <defs>
    <linearGradient id="wm" gradientUnits="userSpaceOnUse" x1="18" x2="492" y1="0" y2="0"><stop offset="0" stop-color="#5a66d2"/><stop offset="0.45" stop-color="#6468d2"/><stop offset="0.62" stop-color="#7470d4"/><stop offset="0.70" stop-color="#9a82cc"/><stop offset="0.82" stop-color="#a488cc"/><stop offset="1" stop-color="#a58fe6"/></linearGradient>
    <mask id="wmm" maskUnits="userSpaceOnUse" x="0" y="0" width="600" height="120"><rect x="0" y="0" width="600" height="120" fill="#fff"/><text transform="scale(0.952,1)" x="15.7 50.6 103.4 158.8 212.1 291.8 348.5 375.3 431.2 465.0" y="81.7" font-family="Liberation Sans, sans-serif" font-weight="bold" font-size="85.5" fill="#000" stroke="#000" stroke-width="1.4" stroke-linejoin="round">ragemp.pro</text></mask>
  </defs>
  <g mask="url(#wmm)"><text transform="scale(0.952,1)" x="15.7 50.6 103.4 158.8 212.1 291.8 348.5 375.3 431.2 465.0" y="81.7" font-family="Liberation Sans, sans-serif" font-weight="bold" font-size="85.5" fill="none" stroke="#d0d0d0" stroke-opacity="0.45" stroke-width="3.6" stroke-linejoin="round">ragemp.pro</text></g>
  <g opacity="0.4"><text transform="scale(0.952,1)" x="15.7 50.6 103.4 158.8 212.1 291.8 348.5 375.3 431.2 465.0" y="81.7" font-family="Liberation Sans, sans-serif" font-weight="bold" font-size="85.5" fill="url(#wm)" stroke="url(#wm)" stroke-width="2" stroke-linejoin="round">ragemp.pro</text></g>
</svg>
</body>
</html>
